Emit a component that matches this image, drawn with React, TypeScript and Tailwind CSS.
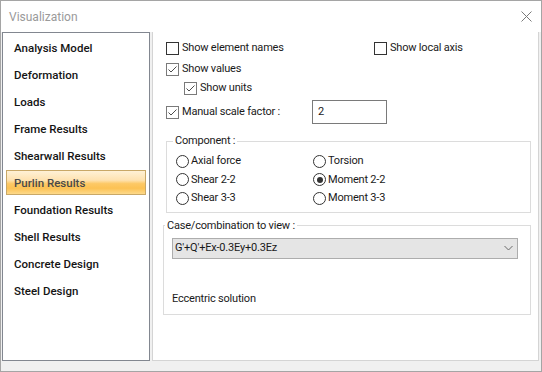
import { ReactNode } from "react";

const menuItems = [
  "Analysis Model",
  "Deformation",
  "Loads",
  "Frame Results",
  "Shearwall Results",
  "Purlin Results",
  "Foundation Results",
  "Shell Results",
  "Concrete Design",
  "Steel Design",
];

const Check = ({ checked, label }: { checked?: boolean; label: string }) => (
  <label className="flex items-center gap-[3px]">
    <span
      className={
        checked
          ? "w-[13px] h-[13px] border border-[#7a7a7a] bg-white flex items-center justify-center shrink-0"
          : "w-[13px] h-[13px] border border-[#333333] bg-white flex items-center justify-center shrink-0"
      }
    >
      {checked && (
        <svg width="11" height="11" viewBox="0 0 11 11">
          <path d="M1.5 5.5 L4 8 L9.5 2.5" stroke="#4d4d4d" strokeWidth="1" fill="none" />
        </svg>
      )}
    </span>
    <span className="text-[#1a1a1a]">{label}</span>
  </label>
);

const Radio = ({ checked, label }: { checked?: boolean; label: string }) => (
  <label className="flex items-center gap-[2px] h-[18.5px]">
    <span className="w-[13px] h-[13px] rounded-full border border-[#333333] bg-white flex items-center justify-center shrink-0">
      {checked && <span className="w-[6px] h-[6px] rounded-full bg-[#333333]" />}
    </span>
    <span className="text-[#1a1a1a]">{label}</span>
  </label>
);

const Group = ({ title, className, legendClass, children }: { title: string; className: string; legendClass: string; children: ReactNode }) => (
  <fieldset className={className}>
    <legend className={legendClass}>{title}</legend>
    {children}
  </fieldset>
);

export default function App() {
  return (
    <div className="w-[542px] h-[372px] border border-[#a5a5a5] bg-[#f0f0f0] flex flex-col font-[Roboto,sans-serif] text-[11px] tracking-[-0.2px] leading-[14px]">
      {/* Title bar */}
      <div className="h-[31px] bg-white flex items-center justify-between pl-[8px] pr-[9px] shrink-0">
        <span className="text-[#9a9a9a] text-[12px] tracking-normal">Visualization</span>
        <svg width="11" height="11" viewBox="0 0 11 11">
          <path d="M0.5 0.5 L10.5 10.5 M10.5 0.5 L0.5 10.5" stroke="#7a7a7a" strokeWidth="1" />
        </svg>
      </div>

      <div className="flex pl-[1px] gap-[2px]">
        {/* Menu list */}
        <div className="w-[148px] h-[329px] border border-[#828790] bg-white pt-[2px] text-[11.5px] tracking-normal">
          {menuItems.map((item) => (
            <div key={item} className="h-[27px]">
              {item === "Purlin Results" ? (
                <div className="mx-[3px] h-[25px] border border-[#c9a867] bg-[linear-gradient(to_bottom,#fff1d6_0%,#fee2b0_40%,#fdc966_55%,#fcc254_75%,#fdd98a_100%)] flex items-center pl-[7px] font-medium text-[#4a4a4a]">
                  {item}
                </div>
              ) : (
                <div className="mx-[3px] h-[25px] border border-transparent flex items-center pl-[7px] font-medium text-[#141414]">
                  {item}
                </div>
              )}
            </div>
          ))}
        </div>

        {/* Options panel */}
        <div className="w-[387px] h-[329px] border-x border-b border-[#d4d4d4] bg-white pl-[10px] pt-[8px]">
          <div className="h-[16px] flex items-center pl-[3px]">
            <div className="w-[208px]">
              <Check label="Show element names" />
            </div>
            <Check label="Show local axis" />
          </div>
          <div className="h-[16px] mt-[5px] flex items-center pl-[3px]">
            <Check checked label="Show values" />
          </div>
          <div className="h-[16px] mt-[3px] flex items-center pl-[21px]">
            <Check checked label="Show units" />
          </div>
          <div className="h-[24px] mt-[4px] flex items-center pl-[3px]">
            <div className="w-[146px]">
              <Check checked label="Manual scale factor :" />
            </div>
            <div className="w-[75px] h-[24px] border border-[#7a7a7a] flex items-center pl-[5px] text-[#1a1a1a]">2</div>
          </div>

          <Group
            title="Component :"
            className="w-[365px] ml-[3px] mt-[10px] border border-[#dcdcdc] px-[9px] pt-[4px] pb-[4px]"
            legendClass="ml-[-3px] px-[2px] text-[#1a1a1a]"
          >
            <div className="grid grid-cols-[137px_1fr]">
              <Radio label="Axial force" />
              <Radio label="Torsion" />
              <Radio label="Shear 2-2" />
              <Radio checked label="Moment 2-2" />
              <Radio label="Shear 3-3" />
              <Radio label="Moment 3-3" />
            </div>
          </Group>

          <Group
            title="Case/combination to view :"
            className="w-[368px] mt-[6px] border border-[#dcdcdc] px-[8px] pb-[8px]"
            legendClass="ml-[-7px] px-[2px] text-[#1a1a1a]"
          >
            <div className="mt-[5px] w-[346px] h-[21px] border border-[#adadad] bg-[#e5e5e5] flex items-center justify-between pl-[2px] pr-[4px] text-[#1a1a1a]">
              <span>G'+Q'+Ex-0.3Ey+0.3Ez</span>
              <svg width="9" height="6" viewBox="0 0 9 6">
                <path d="M0.5 1 L4.5 5 L8.5 1" stroke="#6a6a6a" strokeWidth="1" fill="none" />
              </svg>
            </div>
            <div className="mt-[33px] text-[#1a1a1a]">Eccentric solution</div>
          </Group>
        </div>
      </div>
    </div>
  );
}
